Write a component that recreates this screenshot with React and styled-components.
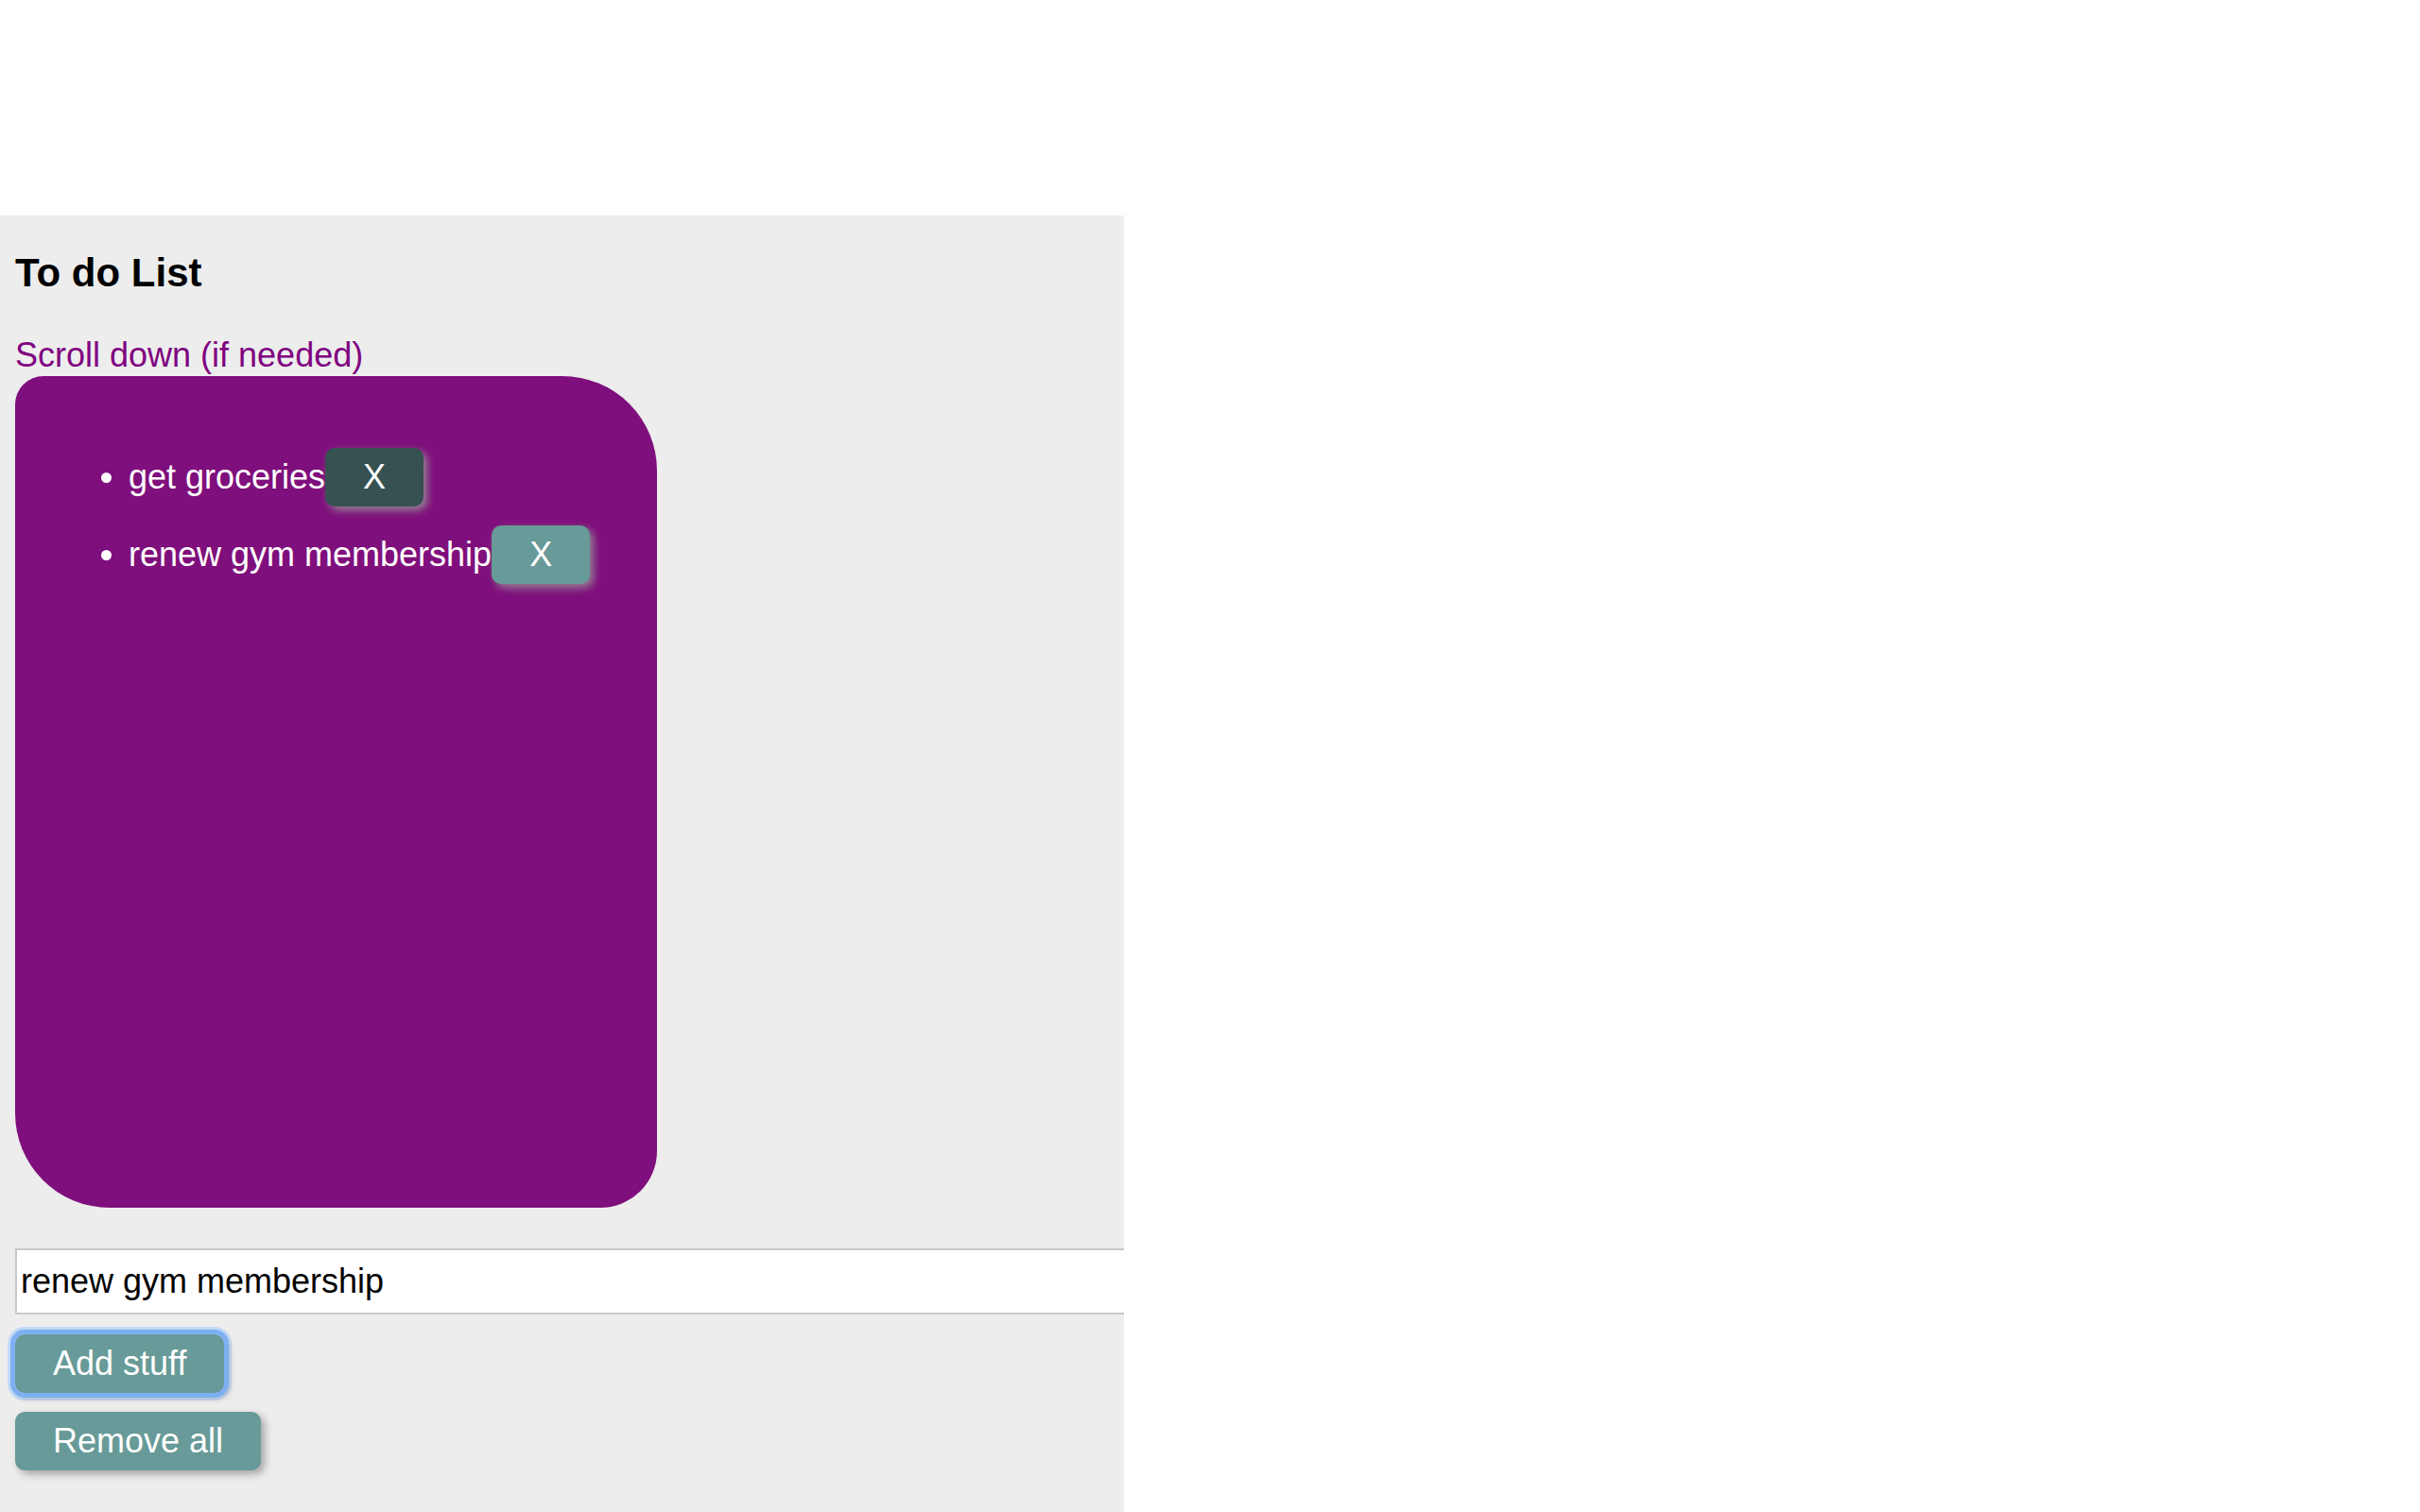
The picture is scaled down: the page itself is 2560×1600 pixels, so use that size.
import React from 'react';
import styled, { createGlobalStyle, css } from 'styled-components';

const GlobalStyle = createGlobalStyle`
  body {
    margin: 0;
    background: #ffffff;
    font-family: "Liberation Sans", Arial, Helvetica, sans-serif;
  }
`;

const Page = styled.div`
  padding-top: 228px;
`;

const Panel = styled.main`
  box-sizing: border-box;
  width: 1189px;
  min-height: 1372px;
  padding: 0 0 40px 16px;
  background: #ededed;
  overflow: hidden;
`;

const Title = styled.h3`
  margin: 37px 0 42px;
  font-size: 42px;
  line-height: 48px;
  font-weight: bold;
  color: #000;
`;

const Hint = styled.p`
  margin: 0;
  font-size: 36px;
  line-height: 42px;
  color: #800080;
`;

const ListBox = styled.div`
  box-sizing: border-box;
  width: 679px;
  height: 880px;
  margin-top: 1px;
  padding: 40px;
  background: #7f0f7c;
  color: #fff;
  border-radius: 30px 100px 60px 100px;
`;

const TodoList = styled.ul`
  margin: 36px 0 0;
  padding-left: 80px;
  font-size: 36px;
`;

const Todo = styled.li`
  & + & {
    margin-top: 20px;
  }
`;

const Button = styled.button`
  font-family: inherit;
  font-size: 36px;
  line-height: 42px;
  padding: 10px 40px;
  border: none;
  border-radius: 10px;
  color: #fff;
  background: ${(p) => (p.$dark ? '#365151' : '#679a98')};
  box-shadow: 4px 4px 8px rgba(150, 150, 150, 0.85);
  cursor: pointer;
  ${(p) =>
    p.$focused &&
    css`
      outline: 5px solid #7db0f1;
      outline-offset: 0;
      box-shadow:
        4px 4px 8px rgba(150, 150, 150, 0.85),
        0 0 0 8px #c2d9f7;
    `}
`;

const Entry = styled.input`
  box-sizing: border-box;
  display: block;
  width: 1220px;
  height: 70px;
  margin-top: 43px;
  padding: 0 4px;
  border: 2px solid #c9c9c9;
  background: #fff;
  font-family: inherit;
  font-size: 36px;
  color: #000;
  outline: none;
`;

const Actions = styled.div`
  display: flex;
  flex-direction: column;
  align-items: flex-start;
  gap: 20px;
  margin-top: 21px;
`;

const todos = [
  { text: 'get groceries', hovered: true },
  { text: 'renew gym membership', hovered: false },
];

export default function App() {
  return (
    <Page>
      <GlobalStyle />
      <Panel>
        <Title>To do List</Title>
        <Hint>Scroll down (if needed)</Hint>
        <ListBox>
          <TodoList>
            {todos.map((t) => (
              <Todo key={t.text}>
                {t.text}
                <Button $dark={t.hovered}>X</Button>
              </Todo>
            ))}
          </TodoList>
        </ListBox>
        <Entry defaultValue="renew gym membership" />
        <Actions>
          <Button $focused>Add stuff</Button>
          <Button>Remove all</Button>
        </Actions>
      </Panel>
    </Page>
  );
}
